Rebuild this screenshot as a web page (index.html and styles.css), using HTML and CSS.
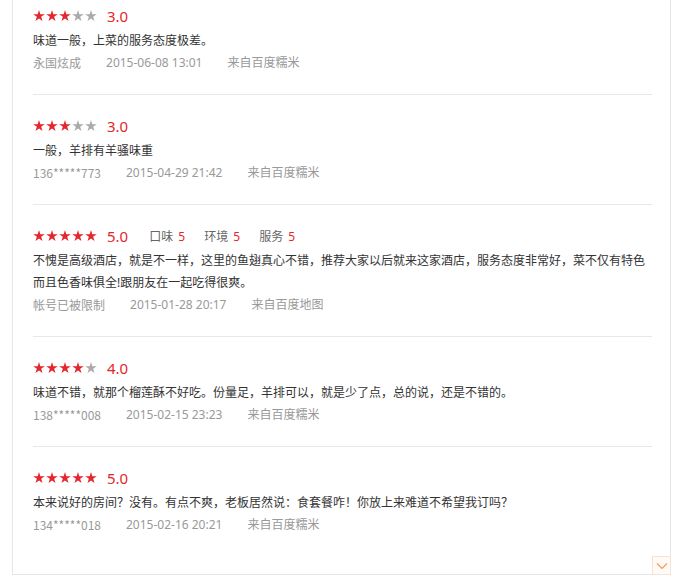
FILE: index.html
```html
<!DOCTYPE html>
<html lang="zh-CN">
<head>
    <meta charset="UTF-8">
    <title>评论</title>
    <link rel="stylesheet" href="styles.css">
</head>
<body>
<div class="comment-panel">
    <ul class="comment-list">
        <li class="comment">
            <div class="score">
                <span class="stars s3"><i></i><i></i><i></i><i></i><i></i></span>
                <span class="num">3.0</span>
            </div>
            <p class="text">味道一般，上菜的服务态度极差。</p>
            <div class="meta"><span class="user">永国炫成</span><span>2015-06-08 13:01</span><span>来自百度糯米</span></div>
        </li>
        <li class="comment">
            <div class="score">
                <span class="stars s3"><i></i><i></i><i></i><i></i><i></i></span>
                <span class="num">3.0</span>
            </div>
            <p class="text">一般，羊排有羊骚味重</p>
            <div class="meta"><span class="user">136*****773</span><span>2015-04-29 21:42</span><span>来自百度糯米</span></div>
        </li>
        <li class="comment">
            <div class="score">
                <span class="stars s5"><i></i><i></i><i></i><i></i><i></i></span>
                <span class="num">5.0</span>
                <span class="sub">口味 <em>5</em></span>
                <span class="sub">环境 <em>5</em></span>
                <span class="sub">服务 <em>5</em></span>
            </div>
            <p class="text">不愧是高级酒店，就是不一样，这里的鱼翅真心不错，推荐大家以后就来这家酒店，服务态度非常好，菜不仅有特色而且色香味俱全!跟朋友在一起吃得很爽。</p>
            <div class="meta"><span class="user">帐号已被限制</span><span>2015-01-28 20:17</span><span>来自百度地图</span></div>
        </li>
        <li class="comment">
            <div class="score">
                <span class="stars s4"><i></i><i></i><i></i><i></i><i></i></span>
                <span class="num">4.0</span>
            </div>
            <p class="text">味道不错，就那个榴莲酥不好吃。份量足，羊排可以，就是少了点，总的说，还是不错的。</p>
            <div class="meta"><span class="user">138*****008</span><span>2015-02-15 23:23</span><span>来自百度糯米</span></div>
        </li>
        <li class="comment">
            <div class="score">
                <span class="stars s5"><i></i><i></i><i></i><i></i><i></i></span>
                <span class="num">5.0</span>
            </div>
            <p class="text">本来说好的房间？没有。有点不爽，老板居然说：食套餐咋！你放上来难道不希望我订吗？</p>
            <div class="meta"><span class="user">134*****018</span><span>2015-02-16 20:21</span><span>来自百度糯米</span></div>
        </li>
    </ul>
    <a class="to-bottom" href="#">
        <svg width="12" height="8" viewBox="0 0 12 8"><path d="M1 1.5 L6 6.5 L11 1.5" fill="none" stroke="#ef9b5c" stroke-width="1.2"/></svg>
    </a>
</div>
</body>
</html>
```

FILE: styles.css
```css
* {
    box-sizing: border-box;
    margin: 0;
    padding: 0;
}

body {
    background: #fff;
    font-family: "Noto Sans", "Noto Sans CJK SC", sans-serif;
    font-size: 12px;
    color: #333;
}

.comment-panel {
    position: relative;
    width: 659px;
    margin: -15px 0 0 12px;
    border: 1px solid #e6e6e6;
    border-top: none;
}

.comment-list {
    list-style: none;
    padding: 0 18px 18px 20px;
}

.comment {
    padding: 19px 0 20px;
    border-bottom: 1px solid #e8e8e8;
}

.comment:last-child {
    border-bottom: none;
}

.score {
    display: flex;
    align-items: center;
    height: 24px;
}

.stars {
    display: flex;
    gap: 1px;
}

.stars i {
    width: 12px;
    height: 12px;
    background: #aaa;
    clip-path: polygon(50% 0%, 61% 35%, 98% 35%, 68% 57%, 79% 91%, 50% 70%, 21% 91%, 32% 57%, 2% 35%, 39% 35%);
}

.s3 i:nth-child(-n+3),
.s4 i:nth-child(-n+4),
.s5 i {
    background: #e4262d;
}

.num {
    margin-left: 10px;
    font-size: 15px;
    color: #e4262d;
}

.sub {
    color: #666;
    margin-left: 19px;
}

.num + .sub {
    margin-left: 21px;
}

.sub em {
    font-style: normal;
    color: #e4262d;
    margin-left: 2px;
}

.text {
    padding-top: 2px;
    line-height: 22px;
}

.meta {
    display: flex;
    height: 22px;
    line-height: 22px;
    color: #999;
}

.meta span {
    margin-right: 25px;
}

.meta .user {
    font-family: "Noto Sans CJK SC", sans-serif;
    margin-right: 25px;
}

.to-bottom {
    position: absolute;
    right: -1px;
    bottom: -1px;
    width: 19px;
    height: 19px;
    display: flex;
    align-items: center;
    justify-content: center;
    border: 1px solid #f3e3d6;
    background: #fffaf6;
}
```
